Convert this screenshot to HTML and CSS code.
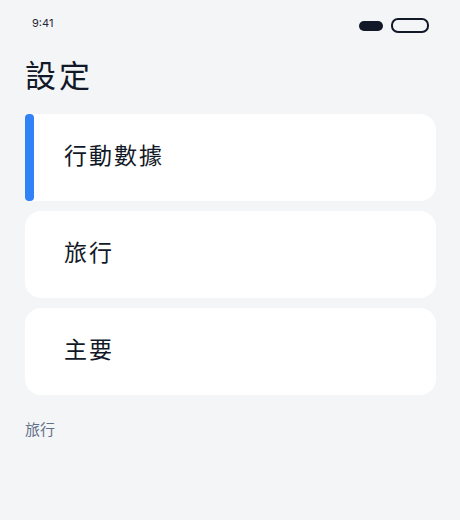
FILE: index.html
```html
<!DOCTYPE html>
<html lang="zh-Hant">
<head>
<meta charset="utf-8">
<link rel="stylesheet" href="styles.css">
</head>
<body>
<div class="screen">
  <div class="status">
    <span class="time">9:41</span>
    <div class="status-icons">
      <span class="pill-filled"></span>
      <span class="pill-outline"></span>
    </div>
  </div>
  <h1 class="title">設定</h1>
  <div class="list">
    <div class="card active">行動數據</div>
    <div class="card">旅行</div>
    <div class="card">主要</div>
  </div>
  <div class="caption">旅行</div>
</div>
</body>
</html>
```

FILE: styles.css
```css
html, body {
  margin: 0;
  padding: 0;
  background: #f4f5f7;
}
body {
  font-family: "Noto Sans CJK TC", "Noto Sans", sans-serif;
  color: #111827;
}
.screen {
  width: 460px;
  height: 520px;
  box-sizing: border-box;
  padding: 0 24px 0 25px;
}
.status {
  height: 48px;
  display: flex;
  align-items: center;
  justify-content: space-between;
  padding: 0 7px 0 7px;
}
.time {
  font-family: "Inter", "Liberation Sans", sans-serif;
  font-size: 11px;
  color: #1f2937;
  margin-top: -2px;
}
.status-icons {
  display: flex;
  align-items: center;
  gap: 8px;
  margin-top: 3px;
}
.pill-filled {
  width: 24px;
  height: 10px;
  border-radius: 5px;
  background: #111827;
}
.pill-outline {
  width: 34px;
  height: 11px;
  border: 2px solid #111827;
  border-radius: 7px;
}
.title {
  margin: 6px 0 0 0;
  font-size: 31px;
  font-weight: 400;
  line-height: 40px;
  letter-spacing: 3px;
  height: 60px;
}
.list {
  display: flex;
  flex-direction: column;
  gap: 10px;
}
.card {
  position: relative;
  height: 87px;
  box-sizing: border-box;
  background: #ffffff;
  border-radius: 16px;
  display: flex;
  align-items: center;
  padding-left: 39px;
  padding-bottom: 8px;
  font-size: 23px;
  letter-spacing: 2px;
  font-weight: 400;
}
.card.active {
  border-top-left-radius: 0;
  border-bottom-left-radius: 0;
}
.card.active::before {
  content: "";
  position: absolute;
  left: 0;
  top: 0;
  bottom: 0;
  width: 9px;
  border-radius: 4px;
  background: #3182f6;
}
.caption {
  margin-top: 23px;
  font-size: 15px;
  line-height: 22px;
  color: #64708a;
}
```
